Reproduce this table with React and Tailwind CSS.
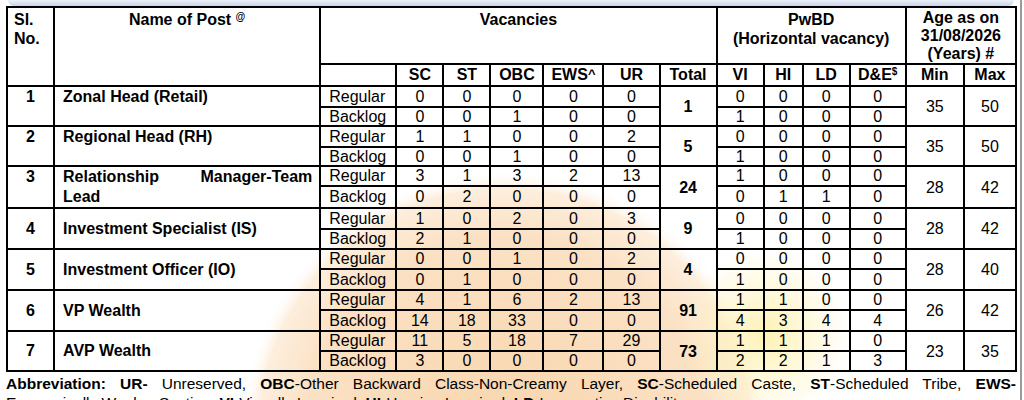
import React from 'react';

const posts = [
  {
    no: '1',
    name: 'Zonal Head (Retail)',
    top: true,
    total: '1',
    reg: ['0', '0', '0', '0', '0'],
    back: ['0', '0', '1', '0', '0'],
    pwReg: ['0', '0', '0', '0'],
    pwBack: ['1', '0', '0', '0'],
    min: '35',
    max: '50',
    h: ['h-[21px]', 'h-[19px]'],
  },
  {
    no: '2',
    name: 'Regional Head (RH)',
    top: true,
    total: '5',
    reg: ['1', '1', '0', '0', '2'],
    back: ['0', '0', '1', '0', '0'],
    pwReg: ['0', '0', '0', '0'],
    pwBack: ['1', '0', '0', '0'],
    min: '35',
    max: '50',
    h: ['h-[21px]', 'h-[19px]'],
  },
  {
    no: '3',
    name: 'Relationship Manager-Team Lead',
    top: true,
    total: '24',
    reg: ['3', '1', '3', '2', '13'],
    back: ['0', '2', '0', '0', '0'],
    pwReg: ['1', '0', '0', '0'],
    pwBack: ['0', '1', '1', '0'],
    min: '28',
    max: '42',
    h: ['h-[20px]', 'h-[21px]'],
  },
  {
    no: '4',
    name: 'Investment Specialist (IS)',
    total: '9',
    reg: ['1', '0', '2', '0', '3'],
    back: ['2', '1', '0', '0', '0'],
    pwReg: ['0', '0', '0', '0'],
    pwBack: ['1', '0', '0', '0'],
    min: '28',
    max: '42',
    h: ['h-[21px]', 'h-[20px]'],
  },
  {
    no: '5',
    name: 'Investment Officer (IO)',
    total: '4',
    reg: ['0', '0', '1', '0', '2'],
    back: ['0', '1', '0', '0', '0'],
    pwReg: ['0', '0', '0', '0'],
    pwBack: ['1', '0', '0', '0'],
    min: '28',
    max: '40',
    h: ['h-[20px]', 'h-[21px]'],
  },
  {
    no: '6',
    name: 'VP Wealth',
    total: '91',
    reg: ['4', '1', '6', '2', '13'],
    back: ['14', '18', '33', '0', '0'],
    pwReg: ['1', '1', '0', '0'],
    pwBack: ['4', '3', '4', '4'],
    min: '26',
    max: '42',
    h: ['h-[20px]', 'h-[21px]'],
  },
  {
    no: '7',
    name: 'AVP Wealth',
    total: '73',
    reg: ['11', '5', '18', '7', '29'],
    back: ['3', '0', '0', '0', '0'],
    pwReg: ['1', '1', '1', '0'],
    pwBack: ['2', '2', '1', '3'],
    min: '23',
    max: '35',
    h: ['h-[20px]', 'h-[20px]'],
  },
];

const cell = 'border-2 border-black p-0';
// sub-row cells: keep line box small so the row height rules
const sub = `${cell} leading-[16px]`;

function Watermark() {
  return (
    <svg className="absolute left-0 top-0 z-0" width="1024" height="400" viewBox="0 0 1024 400">
      <defs>
        <radialGradient id="peach" cx="505" cy="435" r="265" gradientUnits="userSpaceOnUse">
          <stop offset="0" stopColor="#f8d6ad" />
          <stop offset="0.75" stopColor="#fbe1c4" />
          <stop offset="0.93" stopColor="#fdeedc" />
          <stop offset="1" stopColor="#ffffff" stopOpacity="0" />
        </radialGradient>
        <radialGradient id="glow" cx="765" cy="335" r="85" gradientUnits="userSpaceOnUse">
          <stop offset="0" stopColor="#fdf2b6" />
          <stop offset="1" stopColor="#fdf2b6" stopOpacity="0" />
        </radialGradient>
      </defs>
      <circle cx="505" cy="435" r="265" fill="url(#peach)" />
      <circle cx="765" cy="335" r="85" fill="url(#glow)" />
    </svg>
  );
}

export default function App() {
  const th = `${cell} font-bold align-top`;
  return (
    <div className="relative h-[400px] w-[1024px] overflow-hidden bg-white font-['Liberation_Sans',Arial,sans-serif] text-[16px] leading-[19px] text-black">
      <Watermark />
      <div className="absolute left-[8px] right-[10px] top-0 h-[6px] rounded-b-[6px] bg-gradient-to-b from-[#eef2f9] to-[#c9d4ea]" />
      <div className="absolute right-[2px] top-0 h-[400px] w-[2px] bg-[#9a9a9a]" />

      <div className="relative z-10 pl-[6px] pt-[6px]">
        <table className="w-[1011px] table-fixed border-collapse border-2 border-black">
          <colgroup>
            <col className="w-[47px]" />
            <col className="w-[266px]" />
            <col className="w-[76px]" />
            <col className="w-[47px]" />
            <col className="w-[47px]" />
            <col className="w-[53px]" />
            <col className="w-[60px]" />
            <col className="w-[56px]" />
            <col className="w-[57px]" />
            <col className="w-[47px]" />
            <col className="w-[39px]" />
            <col className="w-[47px]" />
            <col className="w-[56px]" />
            <col className="w-[58px]" />
            <col className="w-[52px]" />
          </colgroup>
          <thead>
            <tr className="h-[55px]">
              <th rowSpan={2} className={`${th} pl-[6px] pt-[2px] text-left`}>
                Sl.
                <br />
                No.
              </th>
              <th rowSpan={2} className={`${th} pt-[2px] text-center`}>
                Name of Post <sup className="text-[10px]">@</sup>
              </th>
              <th colSpan={7} className={`${th} pt-[2px] text-center`}>
                Vacancies
              </th>
              <th colSpan={4} className={`${th} pt-[2px] text-center`}>
                PwBD
                <br />
                (Horizontal vacancy)
              </th>
              <th colSpan={2} className={`${th} pt-[1px] text-center leading-[18px]`}>
                Age as on
                <br />
                31/08/2026
                <br />
                (Years) #
              </th>
            </tr>
            <tr className="h-[22px]">
              <th className={`${cell} leading-[18px]`}></th>
              {['SC', 'ST', 'OBC'].map((t) => (
                <th key={t} className={`${cell} font-bold leading-[18px]`}>
                  {t}
                </th>
              ))}
              <th className={`${cell} font-bold leading-[18px]`}>
                EWS<span className="relative -top-[2px] text-[13px]">^</span>
              </th>
              <th className={`${cell} font-bold leading-[18px]`}>UR</th>
              <th className={`${cell} font-bold leading-[18px]`}>Total</th>
              <th className={`${cell} font-bold leading-[18px]`}>VI</th>
              <th className={`${cell} font-bold leading-[18px]`}>HI</th>
              <th className={`${cell} font-bold leading-[18px]`}>LD</th>
              <th className={`${cell} font-bold leading-[18px]`}>
                D&amp;E<sup className="text-[10px]">$</sup>
              </th>
              <th className={`${cell} font-bold leading-[18px]`}>Min</th>
              <th className={`${cell} font-bold leading-[18px]`}>Max</th>
            </tr>
          </thead>
          <tbody>
            {posts.map((p) => (
              <React.Fragment key={p.no}>
                <tr className={p.h[0]}>
                  <td
                    rowSpan={2}
                    className={`${cell} text-center font-bold leading-[20px] ${p.top ? 'align-top' : 'align-middle'}`}
                  >
                    {p.no}
                  </td>
                  <td
                    rowSpan={2}
                    className={`${cell} pl-[8px] pr-[7px] text-justify font-bold leading-[20px] ${p.top ? 'align-top' : 'align-middle'}`}
                  >
                    {p.name}
                  </td>
                  <td className={`${sub} pl-[8px]`}>Regular</td>
                  {p.reg.map((v, i) => (
                    <td key={i} className={`${sub} text-center`}>
                      {v}
                    </td>
                  ))}
                  <td rowSpan={2} className={`${cell} text-center align-middle font-bold`}>
                    {p.total}
                  </td>
                  {p.pwReg.map((v, i) => (
                    <td key={i} className={`${sub} text-center`}>
                      {v}
                    </td>
                  ))}
                  <td rowSpan={2} className={`${cell} text-center align-middle`}>
                    {p.min}
                  </td>
                  <td rowSpan={2} className={`${cell} text-center align-middle`}>
                    {p.max}
                  </td>
                </tr>
                <tr className={p.h[1]}>
                  <td className={`${sub} pl-[8px]`}>Backlog</td>
                  {p.back.map((v, i) => (
                    <td key={i} className={`${sub} text-center`}>
                      {v}
                    </td>
                  ))}
                  {p.pwBack.map((v, i) => (
                    <td key={i} className={`${sub} text-center`}>
                      {v}
                    </td>
                  ))}
                </tr>
              </React.Fragment>
            ))}
          </tbody>
        </table>

        <div className="mt-[2px] w-[1010px] text-[15.5px] leading-[19px]">
          <p className="text-justify [text-align-last:justify]">
            <b>Abbreviation: UR-</b> Unreserved, <b>OBC</b>-Other Backward Class-Non-Creamy Layer,{' '}
            <b>SC</b>-Scheduled Caste, <b>ST</b>-Scheduled Tribe, <b>EWS-</b>
          </p>
          <p>
            Economically Weaker Section, <b>VI</b>-Visually Impaired, <b>HI</b>-Hearing Impaired,{' '}
            <b>LD</b>-Locomotive Disability.
          </p>
        </div>
      </div>
    </div>
  );
}
